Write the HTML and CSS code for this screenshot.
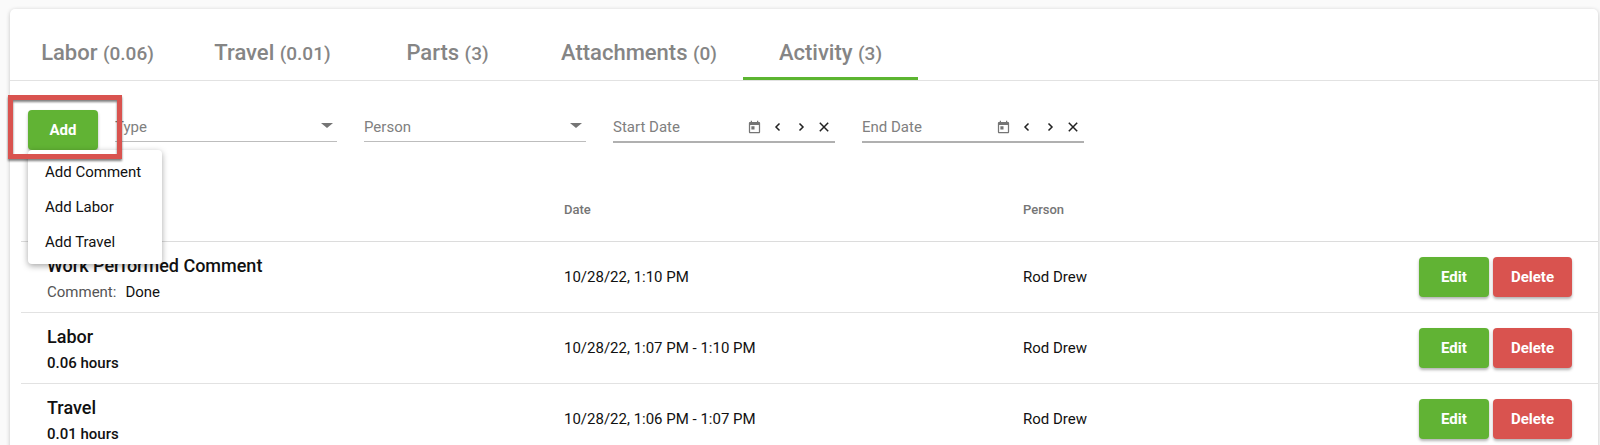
FILE: index.html
```html
<!DOCTYPE html>
<html lang="en">
<head>
<meta charset="utf-8">
<title>Activity</title>
<link rel="stylesheet" href="styles.css">
</head>
<body>
<svg class="sprite" aria-hidden="true">
  <symbol id="today" viewBox="0 0 24 24"><path d="M19 3h-1V1h-2v2H8V1H6v2H5c-1.110 0-2 .9-2 2v14c0 1.100.89 2 2 2h14c1.100 0 2-.9 2-2V5c0-1.100-.9-2-2-2zm0 16H5V8h14v11zM7 10h5v5H7z"/></symbol>
  <symbol id="prev" viewBox="0 0 12 12"><path d="M7.500 2.500L4 6l3.500 3.500"/></symbol>
  <symbol id="next" viewBox="0 0 12 12"><path d="M4.500 2.500L8 6 4.500 9.500"/></symbol>
  <symbol id="clear" viewBox="0 0 12 12"><path d="M1.800 1.800l8.400 8.400M10.200 1.800L1.800 10.200"/></symbol>
</svg>
<main class="card">
  <nav class="tabs" role="tablist">
    <button class="tab" role="tab">Labor <span class="count">(0.06)</span></button>
    <button class="tab" role="tab">Travel <span class="count">(0.01)</span></button>
    <button class="tab" role="tab">Parts <span class="count">(3)</span></button>
    <button class="tab" role="tab">Attachments <span class="count">(0)</span></button>
    <button class="tab active" role="tab" aria-selected="true">Activity <span class="count">(3)</span></button>
  </nav>
  <section class="toolbar">
    <div class="add">
      <button class="btn green" aria-haspopup="menu">Add</button>
      <div class="menu" role="menu">
        <button class="item" role="menuitem">Add Comment</button>
        <button class="item" role="menuitem">Add Labor</button>
        <button class="item" role="menuitem">Add Travel</button>
      </div>
      <div class="highlight"></div>
    </div>
    <div class="filters">
      <div class="field">
        <select class="control" aria-label="Type"><option>Type</option></select>
        <span class="caret"></span>
      </div>
      <div class="field">
        <select class="control" aria-label="Person"><option>Person</option></select>
        <span class="caret"></span>
      </div>
      <div class="field date">
        <input class="control" type="text" placeholder="Start Date" aria-label="Start Date">
        <button class="icon" aria-label="Open calendar"><svg class="cal"><use href="#today"/></svg></button>
        <button class="icon" aria-label="Previous day"><svg class="line"><use href="#prev"/></svg></button>
        <button class="icon" aria-label="Next day"><svg class="line"><use href="#next"/></svg></button>
        <button class="icon" aria-label="Clear"><svg class="line"><use href="#clear"/></svg></button>
      </div>
      <div class="field date">
        <input class="control" type="text" placeholder="End Date" aria-label="End Date">
        <button class="icon" aria-label="Open calendar"><svg class="cal"><use href="#today"/></svg></button>
        <button class="icon" aria-label="Previous day"><svg class="line"><use href="#prev"/></svg></button>
        <button class="icon" aria-label="Next day"><svg class="line"><use href="#next"/></svg></button>
        <button class="icon" aria-label="Clear"><svg class="line"><use href="#clear"/></svg></button>
      </div>
    </div>
  </section>
  <div class="list">
    <table class="table">
      <colgroup><col class="c-what"><col class="c-date"><col class="c-person"><col></colgroup>
      <thead>
        <tr><th></th><th>Date</th><th>Person</th><th></th></tr>
      </thead>
      <tbody>
        <tr>
          <td><div class="title">Work Performed Comment</div><div class="detail"><span class="label">Comment:</span>Done</div></td>
          <td>10/28/22, 1:10 PM</td>
          <td>Rod Drew</td>
          <td><div class="actions"><button class="btn green">Edit</button><button class="btn red">Delete</button></div></td>
        </tr>
        <tr>
          <td><div class="title">Labor</div><div class="detail strong">0.06 hours</div></td>
          <td>10/28/22, 1:07 PM - 1:10 PM</td>
          <td>Rod Drew</td>
          <td><div class="actions"><button class="btn green">Edit</button><button class="btn red">Delete</button></div></td>
        </tr>
        <tr>
          <td><div class="title">Travel</div><div class="detail strong">0.01 hours</div></td>
          <td>10/28/22, 1:06 PM - 1:07 PM</td>
          <td>Rod Drew</td>
          <td><div class="actions"><button class="btn green">Edit</button><button class="btn red">Delete</button></div></td>
        </tr>
      </tbody>
    </table>
  </div>
</main>
</body>
</html>
```

FILE: styles.css
```css
* { box-sizing: border-box; }

body {
  margin: 0;
  padding: 9px 2px 0 10px;
  height: 100vh;
  overflow: hidden;
  background: #fafafa;
  color: #111;
  font: 15px/20px Roboto, "Liberation Sans", sans-serif;
}

button, input, select {
  font: inherit;
  color: inherit;
  border: 0;
  background: none;
  padding: 0;
  margin: 0;
}

.sprite { display: none; }

.card {
  background: #fff;
  border-radius: 5px;
  box-shadow: 0 1px 4px rgba(0, 0, 0, .22);
}

.tabs {
  display: flex;
  height: 72px;
  border-bottom: 1px solid #e2e2e2;
}

.tab {
  min-width: 175px;
  padding: 20px 26px 0;
  border-bottom: 3px solid transparent;
  color: #858585;
  font-size: 22px;
  font-weight: 500;
  line-height: 28px;
  white-space: nowrap;
}

.tab.active { border-bottom-color: #5cb531; }

.count { font-size: 19px; }

.toolbar {
  display: flex;
  align-items: flex-start;
  gap: 17px;
  padding: 29px 18px 0;
}

.add { position: relative; z-index: 2; }

.btn {
  height: 40px;
  min-width: 70px;
  padding: 0 18px;
  border-radius: 4px;
  color: #fff;
  font-weight: 700;
  box-shadow: 0 2px 3px rgba(0, 0, 0, .3);
}

.green { background: #61b334; }
.red { background: #d9534f; }

.add .btn { display: block; }

.menu {
  position: absolute;
  top: 40px;
  left: 0;
  width: 134px;
  padding: 4px 0 5px;
  border-radius: 4px;
  background: #fff;
  box-shadow: 0 2px 6px rgba(0, 0, 0, .35);
}

.item {
  display: block;
  width: 100%;
  height: 35px;
  padding-left: 17px;
  text-align: left;
  white-space: nowrap;
}

.highlight {
  position: absolute;
  inset: -15px -24px -9px -20px;
  border: 5px solid #d9534f;
  filter: drop-shadow(0 2px 1px rgba(0, 0, 0, .5));
  pointer-events: none;
}

.filters {
  flex: 1;
  display: flex;
  gap: 27px;
  color: #808080;
}

.field {
  position: relative;
  flex: 0 1 222px;
  min-width: 0;
  display: flex;
  align-items: center;
  height: 32px;
  border-bottom: 1px solid #bdbdbd;
}

.date {
  height: 33px;
  border-bottom: 2px solid #b0b0b0;
}

.control {
  flex: 1;
  width: 100%;
  min-width: 0;
  height: 31px;
  padding-top: 2px;
  appearance: none;
  outline: 0;
}

.control::placeholder { color: #808080; opacity: 1; }

.caret {
  position: absolute;
  right: 4px;
  border: 6px solid transparent;
  border-top: 5px solid #757575;
  border-bottom: 0;
  pointer-events: none;
}

.icon {
  flex: none;
  display: grid;
  place-items: center;
  width: 23px;
  height: 31px;
  padding-top: 3px;
}

.cal {
  width: 15px;
  height: 15px;
  fill: #757575;
}

.line {
  width: 12px;
  height: 12px;
  fill: none;
  stroke: #222;
  stroke-width: 1.500;
}

.list { padding-left: 11px; }

.table {
  width: 100%;
  table-layout: fixed;
  border-collapse: collapse;
}

.c-what { width: 543px; }
.c-date { width: 459px; }
.c-person { width: 330px; }

.table th {
  height: 91px;
  padding: 30px 0 0;
  border-bottom: 1px solid #dcdcdc;
  color: #757575;
  font-size: 13px;
  font-weight: 500;
  text-align: left;
}

.table td {
  height: 71px;
  padding: 0;
  border-bottom: 1px solid #e2e2e2;
}

.table td:first-child { padding: 4px 0 0 26px; }

.title {
  font-size: 18px;
  font-weight: 500;
  line-height: 26px;
}

.detail { line-height: 26px; }
.strong { font-weight: 500; }

.label {
  margin-right: 9px;
  color: #555;
}

.actions {
  display: flex;
  justify-content: flex-end;
  gap: 4px;
  padding-right: 26px;
}
```
